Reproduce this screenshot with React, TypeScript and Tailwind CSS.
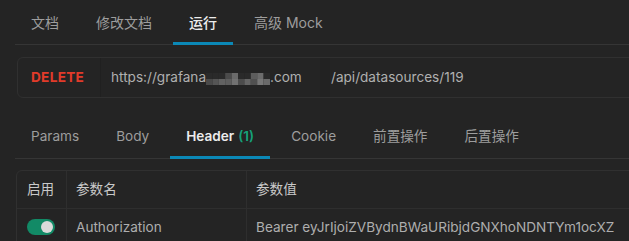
const font = { fontFamily: 'Inter, "Noto Sans CJK SC", sans-serif' };

function Tabs({ items, active, className, activeWeight }: { items: { label: string; count?: number }[]; active: number; className?: string; activeWeight: string }) {
  return (
    <div className={`ml-[15px] flex gap-[5px] border-b border-[#353535] ${className ?? ''}`}>
      {items.map((t, i) => (
        <div key={t.label} className="relative flex items-center px-4">
          <span className={i === active ? `${activeWeight} text-[#ececec]` : 'text-[#9d9d9d]'}>
            {t.label}
            {t.count !== undefined && <span className="ml-1 text-[#15a27a]">({t.count})</span>}
          </span>
          {i === active && <div className="absolute bottom-[-1px] left-0 right-0 h-[3px] bg-[#0b88b6]" />}
        </div>
      ))}
    </div>
  );
}

function Mosaic() {
  const top = ['#2a2a2a', '#2a2a2a', '#2a2a2a', '#4b4b4b', '#6a6a6a', '#2a2a2a', '#2a2a2a', '#5d5d5d', '#6c6c6c', '#2a2a2a'];
  const bottom = ['#4a4a4a', '#555555', '#626262', '#5e5e5e', '#727272', '#4c4c4c', '#656565', '#505050', '#777777', '#6a6a6a'];
  return (
    <svg width="64" height="12" className="mt-[2px]">
      {top.map((c, i) => (
        <rect key={`t${i}`} x={i * 6.4} y={0} width="6.4" height="6" fill={c} />
      ))}
      {bottom.map((c, i) => (
        <rect key={`b${i}`} x={i * 6.4} y={6} width="6.4" height="6" fill={c} />
      ))}
    </svg>
  );
}

export default function App() {
  return (
    <div className="h-[241px] w-[629px] overflow-hidden bg-[#242424] text-[13.6px]" style={font}>
      <Tabs
        className="h-[45px] text-[14px]"
        activeWeight="font-medium"
        active={2}
        items={[{ label: '文档' }, { label: '修改文档' }, { label: '运行' }, { label: '高级 Mock' }]}
      />

      <div className="ml-[17px] mt-[12px] flex h-[41px] w-[640px] items-stretch rounded-l-md border border-[#303030]">
        <div className="flex w-[82px] items-center pl-[13px] font-bold tracking-[0.3px] text-[#e23b2a]">DELETE</div>
        <div className="flex w-[220px] items-center border-l border-[#202020] pl-[10px] text-[#b0b0b0]">
          <span>https://grafana</span>
          <Mosaic />
          <span>.com</span>
        </div>
        <div className="flex flex-1 items-center border-l-[10px] border-[#222222] pl-[1px] text-[#b0b0b0]">/api/datasources/119</div>
      </div>

      <Tabs
        className="mt-[17px] h-[44px]"
        activeWeight="font-semibold"
        active={2}
        items={[
          { label: 'Params' },
          { label: 'Body' },
          { label: 'Header', count: 1 },
          { label: 'Cookie' },
          { label: '前置操作' },
          { label: '后置操作' },
        ]}
      />

      <div className="ml-4 mt-[11px] w-[640px] rounded-tl-md border border-[#303030]">
        <div className="flex h-[38px] border-b border-[#2e2e2e] text-[#c9c9c9]">
          <div className="flex w-[49px] items-center pl-[10px]">启用</div>
          <div className="flex w-[180px] items-center border-l border-[#2e2e2e] pl-[9px]">参数名</div>
          <div className="flex flex-1 items-center border-l border-[#2e2e2e] pl-[9px]">参数值</div>
        </div>
        <div className="flex h-[36px] text-[#aeaeae]">
          <div className="flex w-[49px] items-center pl-[10px]">
            <div className="flex h-[16px] w-[28px] items-center justify-end rounded-full bg-[#128a66] pr-[2px]">
              <div className="h-[12px] w-[12px] rounded-full bg-[#dadada]" />
            </div>
          </div>
          <div className="flex w-[180px] items-center border-l border-[#2e2e2e] pl-[9px]">Authorization</div>
          <div className="flex flex-1 items-center border-l border-[#2e2e2e] pl-[9px]">
            Bearer eyJrIjoiZVBydnBWaURibjdGNXhoNDNTYm1ocXZ
          </div>
        </div>
      </div>
    </div>
  );
}
